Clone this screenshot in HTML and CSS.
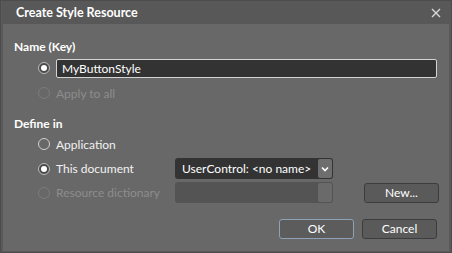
FILE: index.html
```html
<!DOCTYPE html>
<html>
<head>
<meta charset="utf-8">
<link rel="stylesheet" href="styles.css">
</head>
<body>
<div class="dialog">
  <div class="titlebar">
    <span class="title">Create Style Resource</span>
    <svg class="close" width="10" height="10" viewBox="0 0 10 10"><path d="M1 1 L9 9 M9 1 L1 9" stroke="#d8d8d8" stroke-width="1.4"/></svg>
  </div>
  <div class="body">
    <div class="section-label">Name (Key)</div>
    <div class="row r-name">
      <span class="radio checked"></span>
      <div class="textbox">MyButtonStyle</div>
    </div>
    <div class="row r-apply disabled">
      <span class="radio"></span>
      <span class="label">Apply to all</span>
    </div>
    <div class="section-label define">Define in</div>
    <div class="row r-app">
      <span class="radio"></span>
      <span class="label">Application</span>
    </div>
    <div class="row r-doc">
      <span class="radio checked"></span>
      <span class="label wide">This document</span>
      <div class="combo">
        <span class="combo-text">UserControl: &lt;no name&gt;</span>
        <span class="combo-btn"><svg width="8" height="6" viewBox="0 0 8 6"><path d="M1 1.5 L4 4.5 L7 1.5" stroke="#fff" stroke-width="1.6" fill="none"/></svg></span>
      </div>
    </div>
    <div class="row r-dict">
      <span class="radio"></span>
      <span class="label wide disabled-text">Resource dictionary</span>
      <div class="combo off">
        <span class="combo-text"></span>
        <span class="combo-btn"></span>
      </div>
      <div class="btn new">New...</div>
    </div>
    <div class="footer">
      <div class="btn ok">OK</div>
      <div class="btn">Cancel</div>
    </div>
  </div>
</div>
</body>
</html>
```
FILE: styles.css
```css
html, body { margin: 0; padding: 0; background: #4a4a4a; }
body { font-family: Lato, "Open Sans", sans-serif; font-size: 12px; color: #f2f2f2; }
.dialog {
  width: 452px; height: 253px; box-sizing: border-box;
  border: 1px solid #4c4c4c;
  background: #686868;
  display: flex; flex-direction: column;
}
.titlebar {
  height: 23px; background: #585858;
  display: flex; align-items: center; justify-content: space-between;
  padding: 0 10px 0 14px;
  border-left: 1px solid #5c5c5c;
}
.title { font-weight: bold; font-size: 12.5px; color: #fff; }
.close { margin-top: 1px; }
.body {
  flex: 1; border-left: 2px solid #5a5a5a; border-right: 2px solid #5a5a5a; border-bottom: 1px solid #5a5a5a;
  padding: 15px 12px 0 11px;
  display: flex; flex-direction: column;
}
.section-label { font-weight: bold; font-size: 12px; color: #fff; height: 16px; line-height: 16px; }
.define { margin-top: 13px; }
.row { display: flex; align-items: center; padding-left: 24px; white-space: nowrap; }
.radio {
  width: 12px; height: 12px; border-radius: 50%; box-sizing: border-box;
  border: 1px solid #d0d0d0; flex: none; position: relative; margin-right: 6px;
}
.radio.checked { background: #4a4a4a; border-color: #bdbdbd; }
.radio.checked::after {
  content: ""; position: absolute; left: 2px; top: 2px; width: 6px; height: 6px; border-radius: 50%; background: #fff;
}
.disabled .radio, .r-dict .radio { border-color: #7c7c7c; }
.disabled .label, .disabled-text { color: #8d8d8d; }
.r-name { margin-top: 3px; height: 20px; }
.textbox {
  flex: 1; height: 19px; box-sizing: border-box; background: #333;
  border: 1px solid #d4d4d4; border-radius: 2px; padding-left: 5px; line-height: 17px; color: #fff;
}
.r-apply { margin-top: 5px; height: 20px; }
.r-app { margin-top: 2px; height: 20px; }
.r-doc { margin-top: 4px; height: 21px; }
.r-dict { margin-top: 3px; height: 21px; }
.label.wide { width: 119px; flex: none; }
.combo {
  width: 158px; height: 21px; box-sizing: border-box; background: #333; border-radius: 3px; flex: none;
  display: flex; align-items: center; justify-content: space-between; padding: 0 1px 0 7px;
}
.combo-text { color: #fff; }
.combo-btn {
  width: 14px; height: 19px; box-sizing: border-box; background: #6e6e6e; border-radius: 2px;
  display: flex; align-items: center; justify-content: center;
}
.combo.off { background: #545454; }
.combo.off .combo-btn { background: #6a6a6a; }
.btn {
  width: 75px; height: 20px; box-sizing: border-box; border: 1px solid #3c3c3c; border-radius: 3px;
  background: #5a5a5a; color: #fff; text-align: center; line-height: 18px; flex: none;
}
.new { margin-left: 31px; }
.footer { display: flex; justify-content: flex-end; gap: 8px; margin-top: 16px; }
.btn.ok { border-color: #8ea2b5; background: #5c5c5c; }
```
